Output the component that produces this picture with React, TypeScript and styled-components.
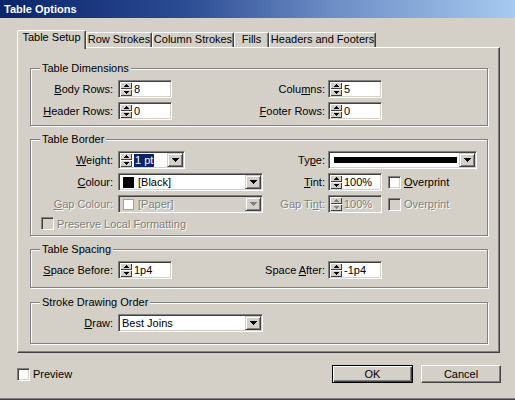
import React from 'react';
import styled, { createGlobalStyle } from 'styled-components';

const GlobalStyle = createGlobalStyle`
  html, body { margin: 0; padding: 0; background: #d4d0c8; }
  body {
    font-family: "Liberation Sans", Arial, sans-serif;
    font-size: 11px;
    color: #000;
  }
  * { box-sizing: border-box; }
`;

const Window = styled.div`
  width: 515px;
  height: 400px;
  display: flex;
  flex-direction: column;
  background: #d4d0c8;
  border-bottom: 1px solid #404040;
  box-shadow: inset 0 -1px #808080;
  overflow: hidden;
`;

const TitleBar = styled.div`
  height: 18px;
  flex: none;
  display: flex;
  align-items: center;
  padding-left: 4px;
  background: linear-gradient(90deg, #0a246a 0%, #2a4a92 35%, #6d8ec6 65%, #a6caf0 100%);
  color: #fff;
  font-weight: bold;
  font-size: 11px;
`;

const Body = styled.div`
  display: flex;
  flex-direction: column;
  padding: 12px 0 0 17px;
`;

const TabStrip = styled.div`
  display: flex;
  align-items: flex-end;
  height: 17px;
`;

const Tab = styled.div<{ $active?: boolean; $w: number }>`
  width: ${(p) => p.$w}px;
  height: ${(p) => (p.$active ? 19 : 15)}px;
  margin-bottom: ${(p) => (p.$active ? -2 : 0)}px;
  position: relative;
  z-index: ${(p) => (p.$active ? 1 : 0)};
  background: #d4d0c8;
  border: 1px solid;
  border-bottom: none;
  border-color: #fff #404040 transparent #fff;
  border-radius: 2px 2px 0 0;
  box-shadow: inset -1px 0 #808080;
  display: flex;
  justify-content: center;
  align-items: flex-start;
  line-height: 13px;
  white-space: nowrap;
`;

const Panel = styled.div`
  width: 483px;
  height: 306px;
  border: 1px solid;
  border-color: #fff #404040 #404040 #fff;
  box-shadow: inset -1px -1px #808080;
  padding: 20px 11px 0 12px;
  display: flex;
  flex-direction: column;
`;

const Group = styled.div<{ $pb: number; $mb: number }>`
  border: 1px solid #808080;
  box-shadow: inset 1px 1px #fff, 1px 1px #fff;
  padding: 0 0 ${(p) => p.$pb}px;
  margin-bottom: ${(p) => p.$mb}px;
  display: flex;
  flex-direction: column;
`;

const Legend = styled.div`
  align-self: flex-start;
  margin: -7px 0 5px 9px;
  padding: 0 2px;
  line-height: 13px;
  background: #d4d0c8;
`;

const Rows = styled.div`
  display: flex;
  flex-direction: column;
  gap: 4px;
`;

const FormRow = styled.div`
  display: grid;
  grid-template-columns: 87px 145px 65px 1fr;
  height: 18px;
  align-items: center;
`;

const FieldLabel = styled.div<{ $pr: number; $disabled?: boolean }>`
  display: flex;
  justify-content: flex-end;
  white-space: nowrap;
  padding-right: ${(p) => p.$pr}px;
  color: ${(p) => (p.$disabled ? '#808080' : '#000')};
  text-shadow: ${(p) => (p.$disabled ? '1px 1px #fff' : 'none')};
`;

const Cell = styled.div`
  display: flex;
  align-items: center;
  height: 18px;
`;

const Sunken = styled.div<{ $w: number; $disabled?: boolean }>`
  display: flex;
  align-items: stretch;
  width: ${(p) => p.$w}px;
  height: 18px;
  flex: none;
  border: 1px solid;
  border-color: #808080 #fff #fff #808080;
  box-shadow: inset 1px 1px #404040, inset -1px -1px #d4d0c8;
  padding: 1px;
  background: ${(p) => (p.$disabled ? '#d4d0c8' : '#fff')};
`;

const SpinCol = styled.div`
  width: 12px;
  flex: none;
  display: flex;
  flex-direction: column;
`;

const SpinButton = styled.div`
  flex: 1;
  display: flex;
  align-items: center;
  justify-content: center;
  background: #d4d0c8;
  box-shadow: inset 1px 1px #fff, inset -1px -1px #404040;
`;

const ValueText = styled.div<{ $disabled?: boolean }>`
  flex: 1;
  display: flex;
  align-items: center;
  padding-left: 2px;
  white-space: nowrap;
  overflow: hidden;
  color: ${(p) => (p.$disabled ? '#808080' : '#000')};
  text-shadow: ${(p) => (p.$disabled ? '1px 1px #fff' : 'none')};
`;

const Selected = styled.span`
  background: #0a246a;
  color: #fff;
  padding: 0 1px;
  line-height: 13px;
`;

const DropButton = styled.div`
  width: 16px;
  flex: none;
  display: flex;
  align-items: center;
  justify-content: center;
  background: #d4d0c8;
  border: 1px solid;
  border-color: #d4d0c8 #404040 #404040 #d4d0c8;
  box-shadow: inset 1px 1px #fff, inset -1px -1px #808080;
`;

const Swatch = styled.span<{ $color: string; $disabled?: boolean }>`
  width: 11px;
  height: 11px;
  flex: none;
  margin: 0 4px 0 1px;
  background: ${(p) => p.$color};
  border: 1px solid ${(p) => (p.$disabled ? '#a0a0a0' : '#000')};
`;

const StrokeBar = styled.span`
  flex: 1;
  height: 6px;
  margin: 0 2px 0 2px;
  background: #000;
`;

const CheckBox = styled.span<{ $disabled?: boolean }>`
  width: 13px;
  height: 13px;
  flex: none;
  border: 1px solid;
  border-color: #808080 #fff #fff #808080;
  box-shadow: inset 1px 1px #404040, inset -1px -1px #d4d0c8;
  background: ${(p) => (p.$disabled ? '#d4d0c8' : '#fff')};
`;

const CheckLabel = styled.div<{ $ml: number; $disabled?: boolean }>`
  display: flex;
  align-items: center;
  gap: 3px;
  margin-left: ${(p) => p.$ml}px;
  white-space: nowrap;
  color: ${(p) => (p.$disabled ? '#808080' : '#000')};
  text-shadow: ${(p) => (p.$disabled ? '1px 1px #fff' : 'none')};
`;

const CheckRow = styled.div`
  display: flex;
  align-items: center;
  height: 13px;
  padding-left: 10px;
`;

const Footer = styled.div`
  display: flex;
  align-items: center;
  height: 18px;
  margin-top: 12px;
  padding-right: 14px;
`;

const Spacer = styled.div`
  flex: 1;
`;

const Button = styled.div<{ $default?: boolean; $w: number }>`
  width: ${(p) => p.$w}px;
  height: 18px;
  display: flex;
  align-items: center;
  justify-content: center;
  background: #d4d0c8;
  margin-left: 8px;
  border: 1px solid;
  border-color: ${(p) => (p.$default ? '#000' : '#fff #404040 #404040 #fff')};
  box-shadow: ${(p) =>
    p.$default
      ? 'inset 1px 1px #fff, inset -1px -1px #404040, inset -2px -2px #808080'
      : 'inset -1px -1px #808080'};
`;

type ArrowProps = { dir: 'up' | 'down'; w: number; color?: string };

const Arrow = ({ dir, w, color = '#000' }: ArrowProps) => {
  const h = Math.ceil(w / 2);
  const rows = Array.from({ length: h }, (_, i) => {
    const inset = dir === 'down' ? i : h - 1 - i;
    return <rect key={i} x={inset} y={i} width={w - inset * 2} height={1} fill={color} />;
  });
  return (
    <svg width={w} height={h} viewBox={`0 0 ${w} ${h}`} shapeRendering="crispEdges">
      {rows}
    </svg>
  );
};

const Spinner = ({ value, w = 54, disabled }: { value: string; w?: number; disabled?: boolean }) => (
  <Sunken $w={w} $disabled={disabled}>
    <SpinCol>
      <SpinButton>
        <Arrow dir="up" w={5} color={disabled ? '#808080' : '#000'} />
      </SpinButton>
      <SpinButton>
        <Arrow dir="down" w={5} color={disabled ? '#808080' : '#000'} />
      </SpinButton>
    </SpinCol>
    <ValueText $disabled={disabled}>{value}</ValueText>
  </Sunken>
);

const Drop = ({ disabled }: { disabled?: boolean }) => (
  <DropButton>
    <Arrow dir="down" w={7} color={disabled ? '#808080' : '#000'} />
  </DropButton>
);

export default function App() {
  return (
    <>
      <GlobalStyle />
      <Window>
        <TitleBar>Table Options</TitleBar>
        <Body>
          <TabStrip>
            <Tab $active $w={69}>Table Setup</Tab>
            <Tab $w={66}>Row Strokes</Tab>
            <Tab $w={82}>Column Strokes</Tab>
            <Tab $w={35}>Fills</Tab>
            <Tab $w={107}>Headers and Footers</Tab>
          </TabStrip>
          <Panel>
            <Group $pb={5} $mb={13}>
              <Legend>Table Dimensions</Legend>
              <Rows>
                <FormRow>
                  <FieldLabel $pr={5}><span><u>B</u>ody Rows:</span></FieldLabel>
                  <Cell><Spinner value="8" /></Cell>
                  <FieldLabel $pr={3}><span>Colu<u>m</u>ns:</span></FieldLabel>
                  <Cell><Spinner value="5" /></Cell>
                </FormRow>
                <FormRow>
                  <FieldLabel $pr={5}><span><u>H</u>eader Rows:</span></FieldLabel>
                  <Cell><Spinner value="0" /></Cell>
                  <FieldLabel $pr={3}><span><u>F</u>ooter Rows:</span></FieldLabel>
                  <Cell><Spinner value="0" /></Cell>
                </FormRow>
              </Rows>
            </Group>

            <Group $pb={5} $mb={13}>
              <Legend>Table Border</Legend>
              <Rows>
                <FormRow>
                  <FieldLabel $pr={5}><span><u>W</u>eight:</span></FieldLabel>
                  <Cell>
                    <Sunken $w={67}>
                      <SpinCol>
                        <SpinButton><Arrow dir="up" w={5} /></SpinButton>
                        <SpinButton><Arrow dir="down" w={5} /></SpinButton>
                      </SpinCol>
                      <ValueText><Selected>1 pt</Selected></ValueText>
                      <Drop />
                    </Sunken>
                  </Cell>
                  <FieldLabel $pr={3}><span>Ty<u>p</u>e:</span></FieldLabel>
                  <Cell>
                    <Sunken $w={149}>
                      <ValueText><StrokeBar /></ValueText>
                      <Drop />
                    </Sunken>
                  </Cell>
                </FormRow>
                <FormRow>
                  <FieldLabel $pr={5}><span><u>C</u>olour:</span></FieldLabel>
                  <Cell>
                    <Sunken $w={145}>
                      <ValueText><Swatch $color="#000" />[Black]</ValueText>
                      <Drop />
                    </Sunken>
                  </Cell>
                  <FieldLabel $pr={3}><span><u>T</u>int:</span></FieldLabel>
                  <Cell>
                    <Spinner value="100%" />
                    <CheckLabel $ml={6}><CheckBox /><span><u>O</u>verprint</span></CheckLabel>
                  </Cell>
                </FormRow>
                <FormRow>
                  <FieldLabel $pr={5} $disabled><span><u>G</u>ap Colour:</span></FieldLabel>
                  <Cell>
                    <Sunken $w={145} $disabled>
                      <ValueText $disabled><Swatch $color="#fff" $disabled />[Paper]</ValueText>
                      <Drop disabled />
                    </Sunken>
                  </Cell>
                  <FieldLabel $pr={3} $disabled><span>Gap Ti<u>n</u>t:</span></FieldLabel>
                  <Cell>
                    <Spinner value="100%" disabled />
                    <CheckLabel $ml={6} $disabled><CheckBox $disabled /><span>Over<u>p</u>rint</span></CheckLabel>
                  </Cell>
                </FormRow>
                <CheckRow>
                  <CheckLabel $ml={0} $disabled><CheckBox $disabled /><span>Preserve Local Formatting</span></CheckLabel>
                </CheckRow>
              </Rows>
            </Group>

            <Group $pb={8} $mb={14}>
              <Legend>Table Spacing</Legend>
              <Rows>
                <FormRow>
                  <FieldLabel $pr={5}><span><u>S</u>pace Before:</span></FieldLabel>
                  <Cell><Spinner value="1p4" /></Cell>
                  <FieldLabel $pr={3}><span>Space <u>A</u>fter:</span></FieldLabel>
                  <Cell><Spinner value="-1p4" /></Cell>
                </FormRow>
              </Rows>
            </Group>

            <Group $pb={11} $mb={0}>
              <Legend>Stroke Drawing Order</Legend>
              <Rows>
                <FormRow>
                  <FieldLabel $pr={5}><span><u>D</u>raw:</span></FieldLabel>
                  <Cell>
                    <Sunken $w={145}>
                      <ValueText>Best Joins</ValueText>
                      <Drop />
                    </Sunken>
                  </Cell>
                </FormRow>
              </Rows>
            </Group>
          </Panel>
          <Footer>
            <CheckLabel $ml={0}><CheckBox /><span>Preview</span></CheckLabel>
            <Spacer />
            <Button $default $w={81}>OK</Button>
            <Button $w={80}>Cancel</Button>
          </Footer>
        </Body>
      </Window>
    </>
  );
}
